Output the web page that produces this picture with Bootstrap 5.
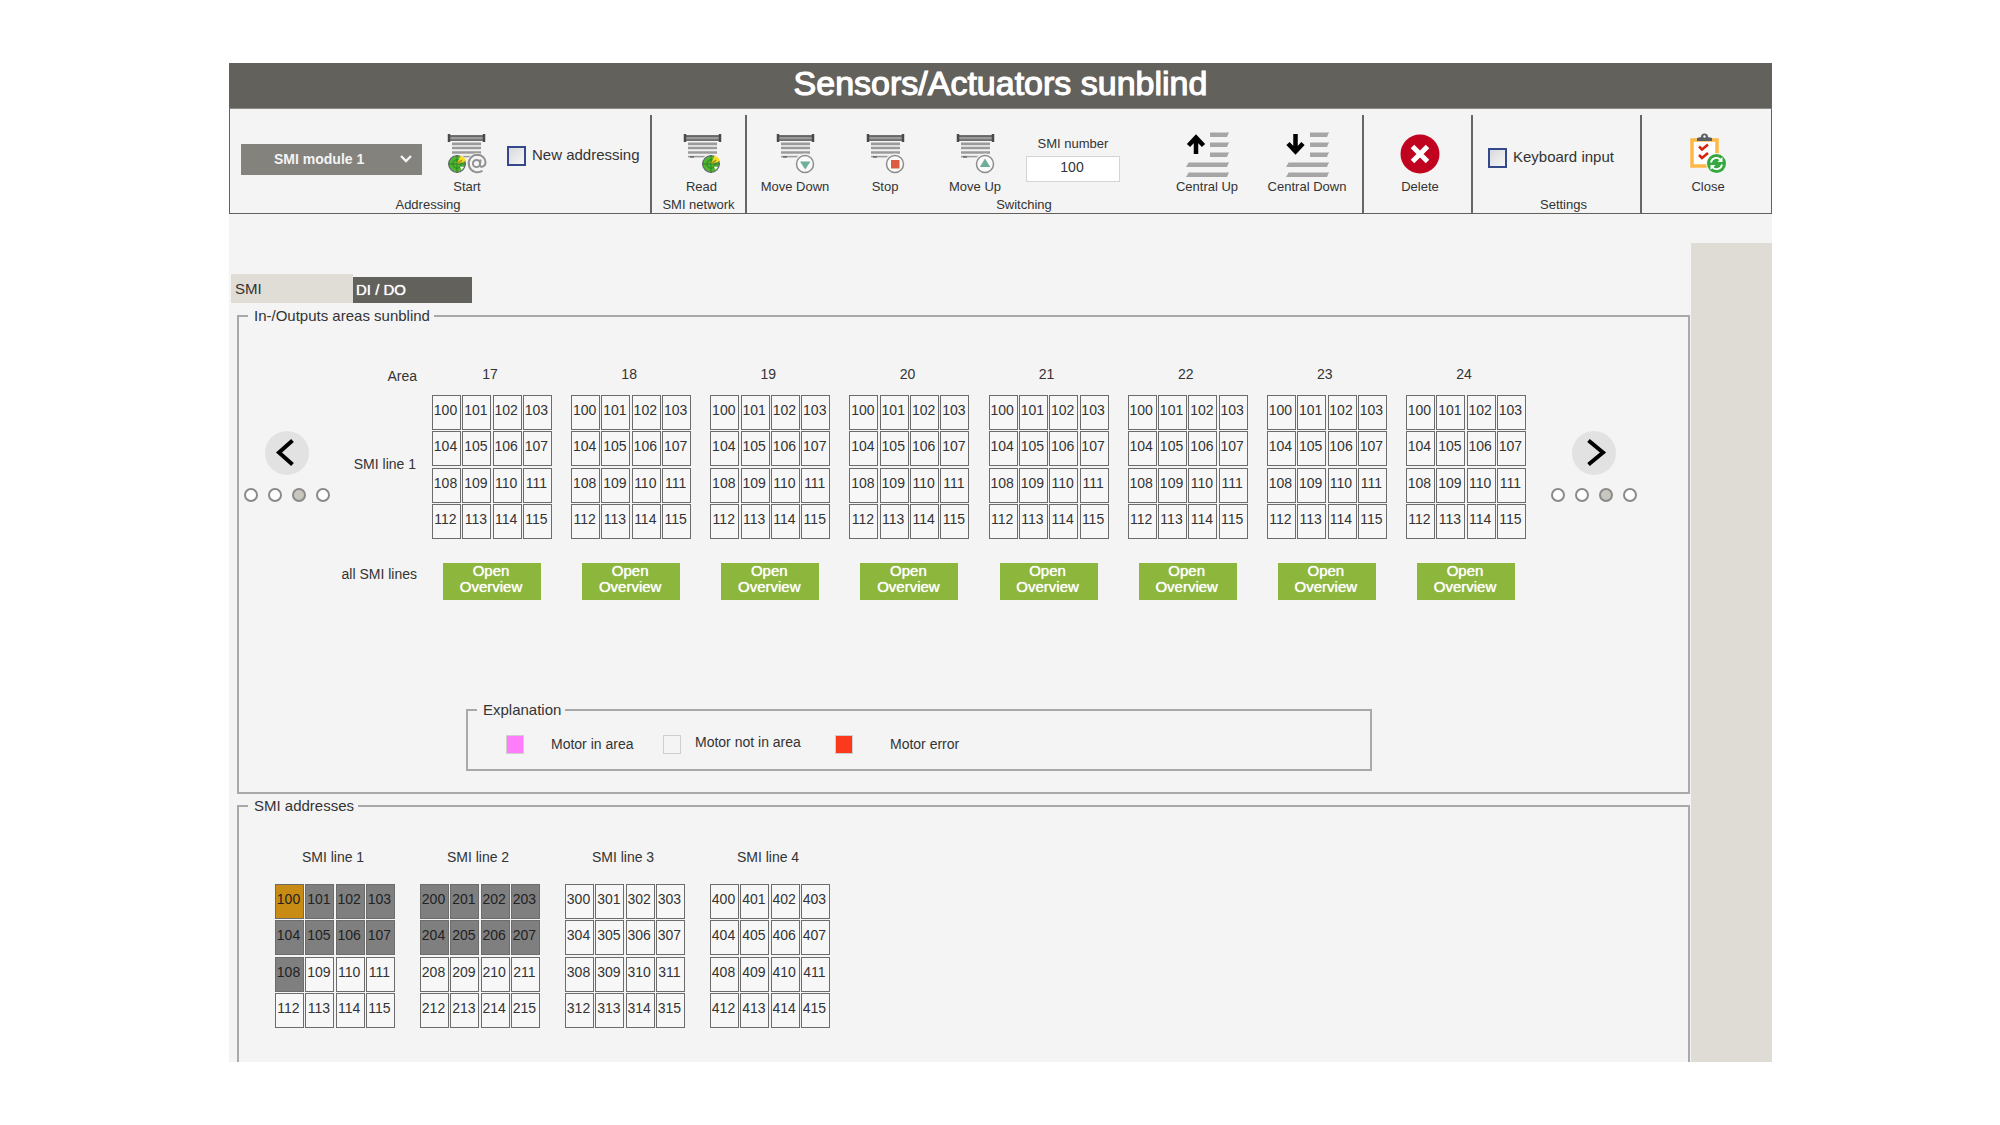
<!DOCTYPE html>
<html lang="en">
<head>
<meta charset="utf-8">
<meta name="viewport" content="width=device-width, initial-scale=1">
<title>Sensors/Actuators sunblind</title>
<link href="https://cdn.jsdelivr.net/npm/bootstrap@5.3.0/dist/css/bootstrap.min.css" rel="stylesheet">
<style>
  body { font-family: "Liberation Sans", Arial, sans-serif; font-size: 15px; line-height: 20px; color: #333; background: #fff; }
  .app { margin: 63px 228px 0 229px; background: #f4f4f4; }
  .app-title { height: 45px; background: #62615c; color: #fff; font-size: 34px; line-height: 40px; font-weight: 400; -webkit-text-stroke: 1px #fff; text-shadow: 0 0 1px #fff; }
  .toolbar { border: 1px solid #62615c; border-top-color: #8b8a86; padding-top: 6px; font-size: 13px; }
  .tool-group { border-right: 2px solid #666; padding-top: 16px; }
  .tool-group:last-child { border-right: 0; }
  .tool-body { height: 66px; }
  .tool-caption { line-height: 16px; }
  .tool { border: 0; padding: 0; background: none; color: #333; line-height: 20px; min-width: 44px; }
  .tool svg { display: block; margin: 0 auto; width: 44px; height: 46px; }
  .g-address { width: 422px; padding-left: 11px; }
  .g-address .tool-caption { padding-right: 35px; }
  .g-read { width: 95px; }
  .g-read .tool { padding-left: 6px; }
  .g-switch { padding-left: 3px; }
  .g-switch .tool-caption { padding-right: 64px; }
  .g-delete { width: 109px; }
  .g-delete .tool { padding-left: 5px; }
  .g-settings { width: 169px; }
  .g-settings .tool-caption { padding-left: 14px; }
  .g-close { width: 129px; }
  .g-close .tool { padding-left: 3px; }
  .w-move { width: 90px; }
  .w-central { width: 100px; }
  .module-pick { margin: 13px 23px 0 0; width: 181px; }
  .module-pick select { appearance: none; width: 100%; height: 31px; border: 0; border-radius: 0; background: #83827d; color: #f4f4f4; font-size: 14px; font-weight: 700; padding: 0 28px 2px 33px; }
  .module-pick svg { position: absolute; right: 9px; top: 10px; pointer-events: none; }
  .tick { font-size: 15px; gap: 6px; margin: 14px 0 0 18px; }
  .tick input { appearance: none; margin: 0; width: 19px; height: 20px; border: 2px solid #34498c; background: linear-gradient(135deg, #d9d9dc, #f6f6f6); }
  .tick input:checked { background: #34498c; }
  .tick label { padding-bottom: 2px; }
  .g-settings .tick { margin: 0 0 0 15px; padding-top: 16px; }
  .smi-number { margin: 3px 37px 0 6px; width: 94px; }
  .smi-number input { height: 26px; border: 1px solid #d4d4d4; background: #fff; text-align: center; font-size: 14px; color: #333; padding: 0 2px 4px 0; margin-top: 2px; }
  .side-strip { width: 81px; margin-top: 29px; background: #dfdcd6; }
  .main-col { padding-top: 60px; min-width: 0; }
  .tabs { padding-left: 2px; margin-bottom: 4px; }
  .tab { border: 0; text-align: left; padding: 0 4px; background: #e0dcd6; color: #333; width: 122px; height: 29px; line-height: 29px; }
  .tab-dark { background: #62615c; color: #fff; width: 119px; height: 26px; line-height: 24px; padding: 0 3px; text-shadow: 0 0 1px #fff; }
  .frame { border: 2px solid #a9a9a9; margin: 0 1px 0 8px; }
  .frame > legend { float: none; width: auto; margin: 0 0 0 9px; padding: 0 4px 0 6px; font-size: 15px; line-height: 18px; }
  .areas-wrap { padding: 39px 51px 0 4px; }
  .pager { width: 87px; padding-top: 67px; }
  .round-btn { width: 44px; height: 44px; border: 0; border-radius: 50%; background: #e2e2e2; padding: 0; margin-bottom: 13px; }
  .round-btn svg { display: block; }
  .page-dots { gap: 10px; }
  .page-dots button { width: 14px; height: 14px; padding: 0; border: 2px solid #8a8a8a; border-radius: 50%; background: #fff; }
  .page-dots button.now { background: #c8c6be; }
  .row-names { width: 87px; padding-top: 2px; margin-right: 15px; font-size: 14px; }
  .row-names .line-name { margin: 68px 0 90px; padding-right: 1px; }
  .areas { margin-right: 24px; }
  .block { width: 120px; }
  .block-name { padding-right: 4px; margin-bottom: 11px; font-size: 14px; }
  .cells { display: grid; grid-template-columns: repeat(4, 29px); grid-template-rows: repeat(4, 35px); width: 120px; height: 144px; justify-content: space-between; align-content: space-between; }
  .cells button { border: 1px solid #6c6c6c; background: #f7f7f7; color: #333; font-size: 14px; line-height: 16px; padding: 0 2px 5px 0; text-align: center; }
  .cells button.used { background: #7f7f7f; color: #222; }
  .cells button.active { background: #c88c14; color: #222; }
  .overview-btn { display: block; width: 98px; height: 37px; margin: 24px auto 0; border: 0; background: #8cb63c; color: #fff; font-size: 15px; line-height: 16px; padding: 0 2px 5px 0; text-shadow: 0 0 1px #fff; }
  .legend-frame { margin: 101px 316px 21px 227px; }
  .legend-row { height: 50px; padding-left: 38px; font-size: 14px; white-space: nowrap; }
  .swatch { width: 18px; height: 19px; border: 1px solid #cfcfcf; }
  .sw-in { background: #fd7dfb; }
  .sw-err { background: #fb3a1c; }
  .txt-in { width: 139px; padding-left: 27px; }
  .txt-none { width: 154px; padding: 0 0 4px 14px; }
  .txt-err { padding-left: 37px; }
  .lines-frame { border-bottom: 0; margin-top: 3px; }
  .lines { padding: 32px 0 34px 36px; gap: 25px; }
  .lines .block-name { margin-bottom: 17px; }
</style>
</head>
<body>
<svg width="0" height="0" class="position-absolute" aria-hidden="true">
  <defs>
    <symbol id="blind" viewBox="0 0 44 46">
      <path d="M6 4.500h33v5H6z" fill="#9a9a9a"/>
      <path d="M6 5h33M6 9.200h33" stroke="#555" stroke-width="1.300"/>
      <path d="M5 3v8M40 3v8" stroke="#4a4a4a" stroke-width="2.500"/>
      <path d="M8 12.800h29M8 17h29M8 21.500h29" stroke="#9b9b9b" stroke-width="2.700"/>
      <path d="M8 25.600h19" stroke="#9b9b9b" stroke-width="1.600"/><path d="M10 26h4" stroke="#444" stroke-width="1"/>
    </symbol>
    <symbol id="radar" viewBox="0 0 20 20">
      <circle cx="10" cy="10" r="10" fill="#f4f4f4"/>
      <circle cx="10" cy="10" r="8.300" fill="#4eb82c" stroke="#667" stroke-width="1.300"/>
      <circle cx="10" cy="10" r="4.200" fill="none" stroke="#2f7f2a" stroke-width="1"/>
      <path d="M10 1v18M1 10h18" stroke="#2f6f2a" stroke-width=".7"/>
      <path d="M10 10 13.500 1.500A9.500 9.500 0 0 1 19 7z" fill="#f7dc22"/>
      <path d="M10 10 15 6" stroke="#a57f1b" stroke-width="1.200"/>
      <path d="M13 12.500l4 .5-2.500 3z" fill="#fff"/>
    </symbol>
    <symbol id="centralbars" viewBox="0 0 44 46">
      <path d="M25 1h19l-2 5H25zM25 11h19l-2 5H25zM25 21h19l-2 5H25z" fill="#a6a6a6"/>
      <path d="M4 31h40l-2 5H1zM4 41h40l-2 5H1z" fill="#a6a6a6"/>
      <path d="M25 1.500h18.500M25 11.500h18.500M25 21.500h18.500M4 31.500h39.500M4 41.500h39.500" stroke="#cdcdcd"/>
    </symbol>
  </defs>
</svg>

<div class="app">
  <h1 class="app-title text-center mb-0">Sensors/Actuators sunblind</h1>

  <div class="toolbar d-flex" role="toolbar" aria-label="Sunblind tools">
    <div class="tool-group g-address flex-shrink-0">
      <div class="tool-body d-flex align-items-start">
        <div class="module-pick position-relative">
          <select aria-label="Module"><option>SMI module 1</option><option>SMI module 2</option></select>
          <svg width="14" height="10" viewBox="0 0 14 10"><path d="M2 2l5 5 5-5" fill="none" stroke="#f4f4f4" stroke-width="2.400"/></svg>
        </div>
        <button type="button" class="tool">
          <svg viewBox="0 0 44 46"><use href="#blind" x="-1" width="44" height="46"/><circle cx="32" cy="32" r="10" fill="#f4f4f4"/><use href="#radar" x="2" y="23" width="20" height="20"/>
            <circle cx="31.500" cy="32.500" r="3.600" fill="none" stroke="#929292" stroke-width="2"/><path d="M35.600 28.500l-.8 5.500c0 3 5.700 2 5.700-2.500 0-4.500-3.500-7.800-8.500-7.800a8.800 8.800 0 1 0 5.500 16" fill="none" stroke="#929292" stroke-width="2"/></svg>
          Start</button>
        <div class="tick d-flex align-items-center"><input type="checkbox" id="newAddr"><label for="newAddr">New addressing</label></div>
      </div>
      <div class="tool-caption text-center">Addressing</div>
    </div>

    <div class="tool-group g-read flex-shrink-0">
      <div class="tool-body text-center">
        <button type="button" class="tool"><svg viewBox="0 0 44 46"><use href="#blind" width="44" height="46"/><use href="#radar" x="21" y="23" width="20" height="20"/></svg>Read</button>
      </div>
      <div class="tool-caption text-center">SMI network</div>
    </div>

    <div class="tool-group g-switch flex-grow-1">
      <div class="tool-body d-flex align-items-start">
        <button type="button" class="tool w-move"><svg viewBox="0 0 44 46"><use href="#blind" width="44" height="46"/><circle cx="32" cy="33" r="10.500" fill="#f4f4f4"/><circle cx="32" cy="33" r="8.500" fill="#fbfbfb" stroke="#8d8d8d" stroke-width="1.500"/><path d="M27 30.500h10.500L32.200 38.500z" fill="#6fae98"/></svg>Move Down</button>
        <button type="button" class="tool w-move"><svg viewBox="0 0 44 46"><use href="#blind" width="44" height="46"/><circle cx="32" cy="33" r="10.500" fill="#f4f4f4"/><circle cx="32" cy="33" r="8.500" fill="#fbfbfb" stroke="#8d8d8d" stroke-width="1.500"/><path d="M28 29h8.500v8.500H28z" fill="#dd5a42"/></svg>Stop</button>
        <button type="button" class="tool w-move"><svg viewBox="0 0 44 46"><use href="#blind" width="44" height="46"/><circle cx="32" cy="33" r="10.500" fill="#f4f4f4"/><circle cx="32" cy="33" r="8.500" fill="#fbfbfb" stroke="#8d8d8d" stroke-width="1.500"/><path d="M26.800 36h10.500L32 27.500z" fill="#6fae98"/></svg>Move Up</button>
        <div class="smi-number text-center">
          <label for="smiNo" class="d-block">SMI number</label>
          <input id="smiNo" type="text" value="100" class="w-100 d-block">
        </div>
        <button type="button" class="tool w-central"><svg viewBox="0 0 44 46"><use href="#centralbars" width="44" height="46"/><path d="M11 23V7M3.500 14.500 11 6.500l7.500 8" fill="none" stroke="#000" stroke-width="4.500"/></svg>Central Up</button>
        <button type="button" class="tool w-central"><svg viewBox="0 0 44 46"><use href="#centralbars" width="44" height="46"/><path d="M10.500 3v17M3 12.500l7.500 8 7.500-8" fill="none" stroke="#000" stroke-width="4.500"/></svg>Central Down</button>
      </div>
      <div class="tool-caption text-center">Switching</div>
    </div>

    <div class="tool-group g-delete flex-shrink-0">
      <div class="tool-body text-center">
        <button type="button" class="tool"><svg viewBox="0 0 44 46"><circle cx="22" cy="23" r="19.500" fill="#c00420"/><path d="M14.500 15.500l15 15M29.500 15.500l-15 15" stroke="#fff" stroke-width="5"/></svg>Delete</button>
      </div>
    </div>

    <div class="tool-group g-settings flex-shrink-0">
      <div class="tool-body">
        <div class="tick d-flex align-items-center"><input type="checkbox" id="kbInput"><label for="kbInput">Keyboard input</label></div>
      </div>
      <div class="tool-caption text-center">Settings</div>
    </div>

    <div class="tool-group g-close flex-shrink-0">
      <div class="tool-body text-center">
        <button type="button" class="tool"><svg viewBox="0 0 44 46">
          <path d="M6 9h25v26H6z" fill="#fff" stroke="#fdb845" stroke-width="3.500"/>
          <path d="M11 10V7l4-1a3.500 3.500 0 0 1 7 0l4 1v3z" fill="#5b5f66"/><circle cx="18.500" cy="5.500" r="1.200" fill="#f4f4f4"/>
          <path d="M13 15.500l3 3 6-5M13 24l3 3 6-5" fill="none" stroke="#d9230f" stroke-width="2.500"/>
          <circle cx="30.500" cy="32.500" r="10.500" fill="#f4f4f4"/><circle cx="30.500" cy="32.500" r="9.500" fill="#35a83f"/>
          <path d="M25 31.500a5.500 5.500 0 0 1 9.500-2.800M36 33.500a5.500 5.500 0 0 1-9.500 2.800" fill="none" stroke="#fff" stroke-width="1.800"/><path d="M36.500 26v5h-5zM24.500 39v-5h5z" fill="#fff"/>
        </svg>Close</button>
      </div>
    </div>
  </div>

  <div class="d-flex">
    <main class="main-col flex-grow-1">
      <div class="tabs d-flex align-items-end" role="tablist">
        <button type="button" class="tab" role="tab" aria-selected="true">SMI</button>
        <button type="button" class="tab tab-dark" role="tab" aria-selected="false">DI / DO</button>
      </div>

      <fieldset class="frame">
        <legend>In-/Outputs areas sunblind</legend>
        <div class="areas-wrap d-flex align-items-start">
          <div class="pager d-flex flex-column align-items-center flex-shrink-0">
            <button type="button" class="round-btn" aria-label="Previous"><svg width="44" height="44" viewBox="0 0 44 44"><path d="M27.500 9.500 14 21.500l13.500 12" fill="none" stroke="#000" stroke-width="4"/></svg></button>
            <div class="page-dots d-flex"></div>
          </div>
          <div class="row-names text-end flex-shrink-0 text-nowrap">
            <div>Area</div>
            <div class="line-name">SMI line 1</div>
            <div>all SMI lines</div>
          </div>
          <div class="areas d-flex justify-content-between flex-grow-1" id="areas"></div>
          <div class="pager d-flex flex-column align-items-center flex-shrink-0">
            <button type="button" class="round-btn" aria-label="Next"><svg width="44" height="44" viewBox="0 0 44 44"><path d="M16.500 9.500 31 21.500l-14.500 12" fill="none" stroke="#000" stroke-width="4"/></svg></button>
            <div class="page-dots d-flex"></div>
          </div>
        </div>

        <fieldset class="frame legend-frame">
          <legend>Explanation</legend>
          <div class="legend-row d-flex align-items-center">
            <span class="swatch sw-in"></span><span class="txt-in">Motor in area</span>
            <span class="swatch"></span><span class="txt-none">Motor not in area</span>
            <span class="swatch sw-err"></span><span class="txt-err">Motor error</span>
          </div>
        </fieldset>
      </fieldset>

      <fieldset class="frame lines-frame">
        <legend>SMI addresses</legend>
        <div class="lines d-flex" id="lines"></div>
      </fieldset>
    </main>
    <aside class="side-strip flex-shrink-0"></aside>
  </div>
</div>

<script>
  // Sixteen address buttons, numbered from `start`; the first `used` of them are taken.
  function cells(start, used, active) {
    let out = '';
    for (let i = 0; i < 16; i++) {
      const n = start + i;
      const cls = n === active ? 'active' : i < used ? 'used' : '';
      out += `<button type="button" class="${cls}">${n}</button>`;
    }
    return `<div class="cells">${out}</div>`;
  }
  let areas = '';
  for (let a = 17; a <= 24; a++) {
    areas += `<div class="block"><div class="block-name text-center">${a}</div>${cells(100, 0)}` +
             `<button type="button" class="overview-btn">Open<br>Overview</button></div>`;
  }
  document.getElementById('areas').innerHTML = areas;

  const used = [9, 8, 0, 0];
  document.getElementById('lines').innerHTML = used.map((u, i) =>
    `<div class="block"><div class="block-name text-center">SMI line ${i + 1}</div>${cells((i + 1) * 100, u, 100)}</div>`).join('');

  document.querySelectorAll('.page-dots').forEach(el => {
    el.innerHTML = [1, 2, 3, 4].map(p => `<button type="button" aria-label="Page ${p}" class="${p === 3 ? 'now' : ''}"></button>`).join('');
  });
</script>
<script src="https://cdn.jsdelivr.net/npm/bootstrap@5.3.0/dist/js/bootstrap.bundle.min.js"></script>
</body>
</html>
